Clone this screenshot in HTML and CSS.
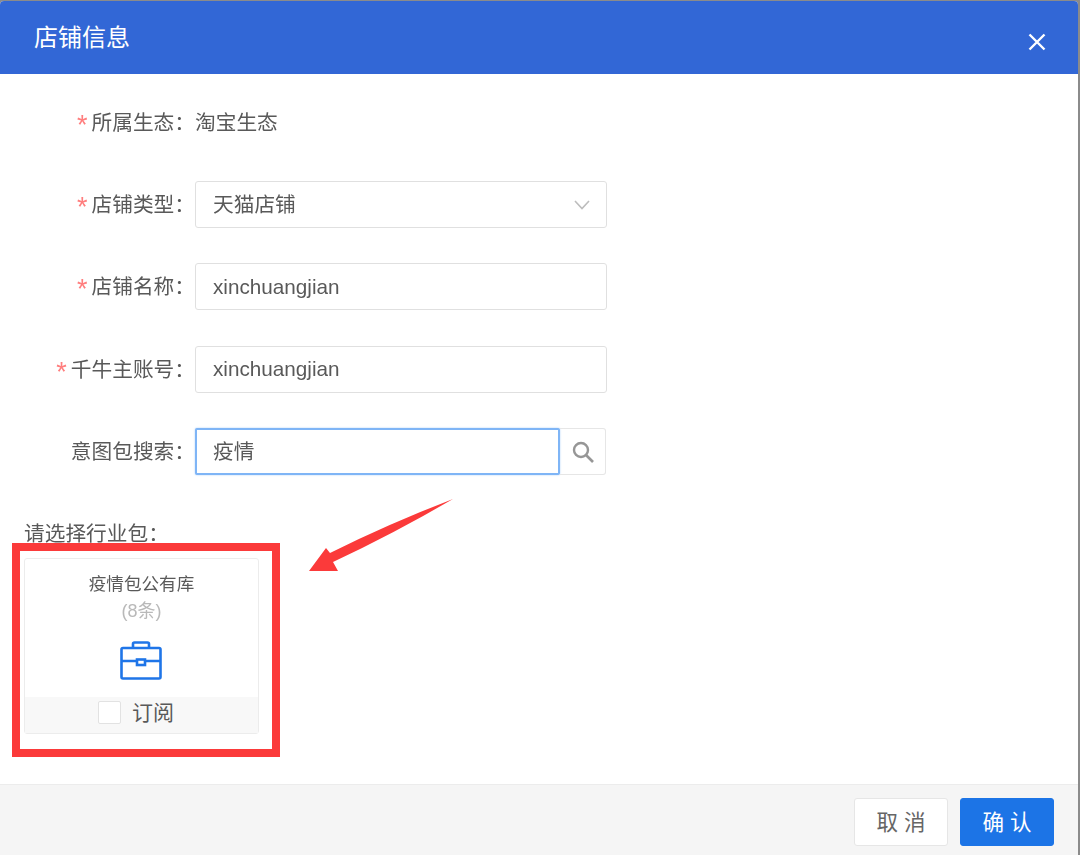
FILE: index.html
```html
<!DOCTYPE html>
<html lang="zh">
<head>
<meta charset="utf-8">
<title>店铺信息</title>
<link rel="stylesheet" href="styles.css">
</head>
<body>
<div class="dialog">
  <header class="head">
    <h1 class="title">店铺信息</h1>
    <svg class="close" width="20" height="20" viewBox="0 0 20 20"><path d="M2.500 2.500L17.500 17.500M17.500 2.500L2.500 17.500" stroke="#fff" stroke-width="2.400" fill="none"/></svg>
  </header>
  <main class="body">
    <div class="form">
      <div class="row">
        <label class="label"><span class="star">*</span>所属生态：</label>
        <span class="value">淘宝生态</span>
      </div>
      <div class="row">
        <label class="label"><span class="star">*</span>店铺类型：</label>
        <div class="field select"><span class="cjk">天猫店铺</span>
          <svg class="chev" width="16" height="10" viewBox="0 0 16 10"><path d="M1 1L8 8.500L15 1" stroke="#bdbdbd" stroke-width="1.600" fill="none"/></svg>
        </div>
      </div>
      <div class="row">
        <label class="label"><span class="star">*</span>店铺名称：</label>
        <div class="field">xinchuangjian</div>
      </div>
      <div class="row">
        <label class="label"><span class="star">*</span>千牛主账号：</label>
        <div class="field">xinchuangjian</div>
      </div>
      <div class="row">
        <label class="label">意图包搜索：</label>
        <div class="search">
          <div class="field focus"><span class="cjk">疫情</span></div>
          <div class="addon">
            <svg width="24" height="24" viewBox="0 0 24 24"><circle cx="10" cy="10" r="7" stroke="#969696" stroke-width="2.400" fill="none"/><path d="M15 15L22 22" stroke="#969696" stroke-width="2.600" fill="none"/></svg>
          </div>
        </div>
      </div>
    </div>
    <div class="section">请选择行业包：</div>
    <div class="card">
      <div class="card-title">疫情包公有库</div>
      <div class="card-count">(8条)</div>
      <svg class="case" width="42" height="40" viewBox="0 0 42 40"><g stroke="#1f75e8" stroke-width="2.600" fill="none"><rect x="1.500" y="7" width="39" height="30.500" rx="1.500"/><path d="M13 7V3a1.500 1.500 0 0 1 1.500-1.500h13a1.500 1.500 0 0 1 1.500 1.500V7"/><path d="M1.500 20H17M25 20H40.500"/><rect x="17" y="18.500" width="8" height="5.500"/></g></svg>
      <div class="card-foot">
        <span class="check"></span>
        <span class="sub">订阅</span>
      </div>
    </div>
    <div class="mark"></div>
    <svg class="arrow" width="148" height="76" viewBox="0 0 148 76"><path d="M145 1Q80 26 22 55L18 50L1 73L30 73L25 64Q85 36 145 1Z" fill="#fb3a3a"/></svg>
  </main>
  <footer class="foot">
    <button class="btn">取 消</button>
    <button class="btn primary">确 认</button>
  </footer>
</div>
</body>
</html>
```
FILE: styles.css
```css
* { box-sizing: border-box; }
html, body { margin: 0; height: 100%; }
body {
  width: 1080px;
  height: 855px;
  overflow: hidden;
  background: #8b8b8b;
  padding: 1px 2px 0 0;
  font-family: "Liberation Sans", "Noto Sans CJK SC", sans-serif;
  font-size: 20.700px;
  color: #595959;
}
.dialog {
  height: 854px;
  display: flex;
  flex-direction: column;
  background: #fff;
  border-radius: 4px 4px 0 0;
  overflow: hidden;
  filter: blur(0.7px);
}
.head {
  height: 73px;
  flex: none;
  background: #3267d6;
  display: flex;
  align-items: center;
  justify-content: space-between;
  padding: 0 31px 0 34px;
}
.title {
  margin: 0;
  font-size: 24px;
  line-height: 30px;
  font-weight: 400;
  color: #fff;
}
.close { margin-top: 8px; }
.body {
  flex: 1;
  position: relative;
  padding: 24.900px 0 0 0;
}
.form {
  display: flex;
  flex-direction: column;
  gap: 35.300px;
}
.row {
  display: flex;
  align-items: center;
  height: 47px;
}
.label {
  width: 195px;
  text-align: right;
  white-space: nowrap;
  padding-bottom: 3px;
}
.star {
  display: inline-block;
  font-size: 27px;
  line-height: 20px;
  vertical-align: -4px;
  color: #ff7e7e;
  margin-right: 4px;
}
.value { padding-bottom: 3px; }
.cjk { padding-bottom: 4px; }
.field {
  width: 412px;
  height: 47px;
  padding: 0 16px 0 17px;
  display: flex;
  align-items: center;
  justify-content: space-between;
  border: 1px solid #e0e0e0;
  border-radius: 3px;
  background: #fff;
}
.search { display: flex; }
.focus {
  width: 365px;
  border: 2px solid #7fb5f6;
  border-radius: 2px;
  box-shadow: 0 0 2px #a9cdf8;
  padding: 0 15px 0 16px;
}
.addon {
  width: 46px;
  height: 47px;
  display: flex;
  align-items: center;
  justify-content: center;
  border: 1px solid #e6e6e6;
  border-left: 0;
  border-radius: 0 3px 3px 0;
}
.section {
  margin: 47px 0 0 24px;
  line-height: 24px;
}
.card {
  width: 235px;
  height: 176px;
  margin: 12px 0 0 24px;
  border: 1px solid #ececec;
  border-radius: 3px;
  display: flex;
  flex-direction: column;
  align-items: center;
}
.card-title {
  margin-top: 14px;
  font-size: 17.600px;
  line-height: 22px;
}
.card-count {
  margin-top: 5px;
  font-size: 18px;
  line-height: 22px;
  color: #b9b9b9;
}
.case { margin: 19px 2px 0 0; flex: none; }
.card-foot {
  margin-top: auto;
  align-self: stretch;
  height: 36px;
  background: #f8f8f8;
  display: flex;
  align-items: center;
  justify-content: center;
  gap: 11px;
  padding: 0 11px 5px 0;
}
.check {
  width: 23px;
  height: 23px;
  border: 1px solid #e2e2e2;
  border-radius: 2px;
  background: #fff;
}
.sub { font-size: 21px; padding-bottom: 3px; }
.mark {
  position: absolute;
  left: 12px;
  top: 469px;
  width: 268px;
  height: 214px;
  border: 8px solid #fb3a3a;
}
.arrow {
  position: absolute;
  left: 308px;
  top: 424px;
}
.foot {
  height: 71px;
  flex: none;
  background: #f5f5f5;
  border-top: 1px solid #ececec;
  display: flex;
  align-items: flex-start;
  justify-content: flex-end;
  gap: 12px;
  padding: 13px 24px 0 0;
}
.btn {
  width: 94px;
  height: 48px;
  font: inherit;
  font-size: 21.500px;
  color: #666;
  background: #fff;
  border: 1px solid #e6e6e6;
  border-radius: 3px;
  padding: 0 0 3px;
}
.primary {
  background: #1c74e6;
  border-color: #1c74e6;
  color: #fff;
}
```
